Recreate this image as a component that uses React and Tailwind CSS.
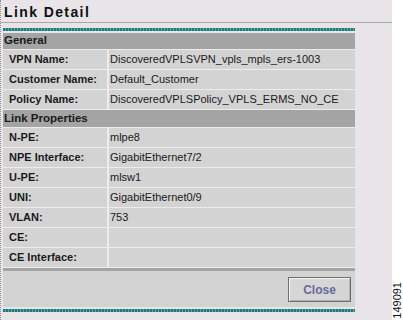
const general = [
  ['VPN Name:', 'DiscoveredVPLSVPN_vpls_mpls_ers-1003'],
  ['Customer Name:', 'Default_Customer'],
  ['Policy Name:', 'DiscoveredVPLSPolicy_VPLS_ERMS_NO_CE'],
];

const linkProps = [
  ['N-PE:', 'mlpe8'],
  ['NPE Interface:', 'GigabitEthernet7/2'],
  ['U-PE:', 'mlsw1'],
  ['UNI:', 'GigabitEthernet0/9'],
  ['VLAN:', '753'],
  ['CE:', ''],
  ['CE Interface:', ''],
];

function Teal() {
  return (
    <div className="h-[3px] w-[352px] bg-[repeating-linear-gradient(90deg,#1e7b7b_0_2px,#5aa9a9_2px_3px)]" />
  );
}

function Section({ title, tall }) {
  return (
    <div
      className={`${tall ? 'h-[17px]' : 'h-[16px]'} bg-[#a4a4a4] flex items-center pl-[1px] text-[11.5px] font-bold text-[#1a1a1a]`}
    >
      {title}
    </div>
  );
}

function Row({ label, value }) {
  return (
    <div className="flex h-[19px] gap-[2px]">
      <div className="w-[104px] bg-[#d3d3d3] flex items-center pl-[6px] text-[11px] font-bold text-[#1a1a1a]">
        {label}
      </div>
      <div className="flex-1 bg-[#d3d3d3] flex items-center pl-[1px] text-[11px] text-[#1a1a1a]">
        {value}
      </div>
    </div>
  );
}

export default function App() {
  return (
    <div className="flex w-[403px] h-[320px] bg-white overflow-hidden font-['Liberation_Sans',Arial,sans-serif]">
      <div className="w-[392px] h-full bg-[#e8e4e8] border-l border-dotted border-[#8c8c8c] flex flex-col">
        <div className="h-[23px] border-b border-[#a8a8a8] flex items-center pl-[3px] pt-[2px] text-[14px] font-bold tracking-[1.4px] text-[#111]">
          Link Detail
        </div>
        <div className="pl-[2px] pt-[5px] flex flex-col">
          <Teal />
          <div className="w-[352px] mt-[2px] bg-[#ececec] flex flex-col gap-px">
            <Section title="General" />
            {general.map(([l, v]) => (
              <Row key={l} label={l} value={v} />
            ))}
            <Section title="Link Properties" tall />
            {linkProps.map(([l, v]) => (
              <Row key={l} label={l} value={v} />
            ))}
            <div className="h-[3px] bg-[#a4a4a4]" />
          </div>
          <div className="w-[352px] h-[36px] bg-[#d3d3d3] flex items-start justify-end pt-[6px] pr-[4px]">
            <button className="w-[63px] h-[25px] bg-[#d6d6d6] border border-[#6e6e6e] shadow-[inset_1px_1px_0_#f4f4f4,inset_-1px_-1px_0_#b0b0b0] text-[12px] font-bold text-[#6a6a9c]">
              Close
            </button>
          </div>
          <div className="mt-[2px]">
            <Teal />
          </div>
        </div>
      </div>
      <div className="flex-1 flex flex-col justify-end items-center pb-[1px]">
        <span className="[writing-mode:vertical-rl] rotate-180 text-[11px] leading-none text-[#111]">
          149091
        </span>
      </div>
    </div>
  );
}
